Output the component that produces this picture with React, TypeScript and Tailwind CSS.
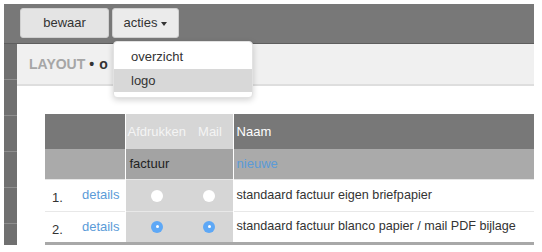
import React from "react";

const font = { fontFamily: '"Liberation Sans", Arial, sans-serif' };

function Radio({ on }: { on?: boolean }) {
  return on ? (
    <span className="inline-flex h-[12px] w-[12px] items-center justify-center rounded-full bg-[#5ea8f6]">
      <span className="h-[3px] w-[3px] rounded-full bg-white" />
    </span>
  ) : (
    <span className="inline-block h-[12px] w-[12px] rounded-full bg-white" />
  );
}

export default function App() {
  return (
    <div className="relative h-[252px] w-[542px] overflow-hidden bg-white pl-[4px] pr-[8px] pt-[4px] text-[13px] text-[#333]" style={font}>
      <div className="flex h-[40px] items-start border-b border-[#5e5e5e] bg-[#787878] pl-[16px] pt-[4px]">
        <button className="h-[30px] w-[89px] rounded-[3px] border border-[#d0d0d0] bg-[#e4e4e4] text-[13px] text-[#333]">bewaar</button>
        <button className="ml-[3px] flex h-[30px] w-[67px] items-center justify-center gap-[4px] rounded-[3px] border border-[#d0d0d0] bg-[#ebebeb] text-[13px] text-[#333]">
          acties
          <span className="mt-[1px] h-0 w-0 border-x-[3.5px] border-t-[4px] border-x-transparent border-t-[#333]" />
        </button>
      </div>
      <div className="flex">
        <div className="flex w-[13px] flex-col bg-[#707070]">
          {[0, 1, 2, 3, 4].map((i) => (
            <div key={i} className="h-[36px] border-b border-[#8e8e8e]" />
          ))}
          <div className="h-[20px]" />
        </div>
        <div className="flex-1">
          <div className="flex h-[42px] items-center border-b-2 border-[#dedede] bg-[#f0f0f0] pl-[12px]">
            <span className="text-[14px] font-bold text-[#a6a6a6]">LAYOUT</span>
            <span className="ml-[4px] text-[14px] font-bold text-[#333]">•</span>
            <span className="ml-[5px] text-[14px] font-bold text-[#333]">o</span>
          </div>
          <div className="ml-[28px] mt-[28px]">
            <table className="w-full border-collapse text-[13px]">
              <tbody>
                <tr className="h-[35px]">
                  <td className="w-[80px] border-r border-white bg-[#787878]" />
                  <td className="w-[60px] bg-[#d6d6d6] pl-[2px] text-[#f4f4f4]">Afdrukken</td>
                  <td className="w-[47px] border-r border-white bg-[#d6d6d6] pl-[12px] text-[#f4f4f4]">Mail</td>
                  <td className="bg-[#787878] pl-[3px] text-white">Naam</td>
                </tr>
                <tr className="h-[30px] border-b border-[#e6e6e6]">
                  <td className="border-r border-white bg-[#aaaaaa]" />
                  <td colSpan={2} className="border-r border-white bg-[#a3a3a3] pl-[4px] text-[#222]">factuur</td>
                  <td className="bg-[#aaaaaa] pl-[3px] text-[#5b9bd8]">nieuwe</td>
                </tr>
                <tr className="h-[32px] border-b border-[#e8e8e8]">
                  <td className="border-r border-white">
                    <div className="flex items-center justify-between pr-[5px]">
                      <span className="pl-[7px] pt-[6px]">1.</span>
                      <span className="text-[#5b9bd8]">details</span>
                    </div>
                  </td>
                  <td className="bg-[#d6d6d6] pl-[3px]"><div className="flex justify-center pt-[1px]"><Radio /></div></td>
                  <td className="border-r border-white bg-[#d6d6d6]"><div className="flex justify-center pt-[1px]"><Radio /></div></td>
                  <td className="pl-[3px] text-[12.6px]">standaard factuur eigen briefpapier</td>
                </tr>
                <tr className="h-[32px] border-b-[3px] border-[#a8a8a8]">
                  <td className="border-r border-white">
                    <div className="flex items-center justify-between pr-[5px]">
                      <span className="pl-[7px] pt-[6px]">2.</span>
                      <span className="text-[#5b9bd8]">details</span>
                    </div>
                  </td>
                  <td className="bg-[#d6d6d6] pl-[3px]"><div className="flex justify-center"><Radio on /></div></td>
                  <td className="border-r border-white bg-[#d6d6d6]"><div className="flex justify-center"><Radio on /></div></td>
                  <td className="pl-[3px] text-[12.6px]">standaard factuur blanco papier / mail PDF bijlage</td>
                </tr>
              </tbody>
            </table>
          </div>
        </div>
      </div>
      <div className="absolute left-[113px] top-[41px] w-[140px] rounded-[4px] border border-[#e2e2e2] bg-white pb-[5px] shadow-[0_2px_6px_rgba(0,0,0,0.18)]">
        <div className="flex h-[27px] items-center pl-[17px] pt-[3px] text-[13px] text-[#333]">overzicht</div>
        <div className="flex h-[23px] items-center bg-[#d8d8d8] pl-[17px] text-[13px] text-[#333]">logo</div>
      </div>
    </div>
  );
}
